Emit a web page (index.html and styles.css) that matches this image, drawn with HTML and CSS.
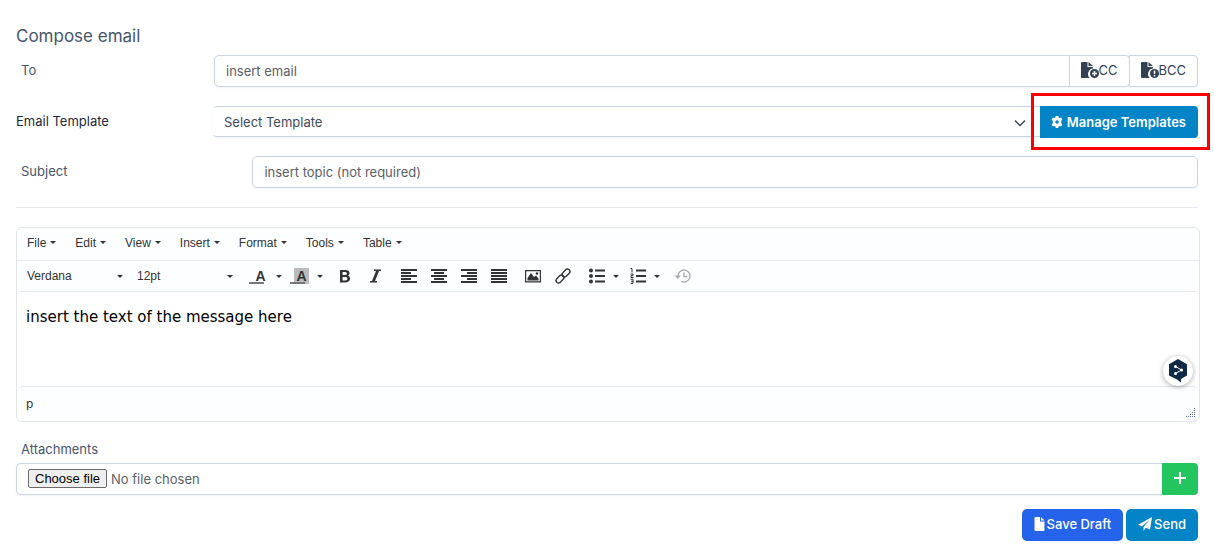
FILE: index.html
```html
<!DOCTYPE html>
<html lang="en">
<head>
<meta charset="UTF-8">
<meta name="viewport" content="width=device-width, initial-scale=1.0">
<title>Compose email</title>
<link rel="stylesheet" href="styles.css">
</head>
<body>
<form class="compose" onsubmit="return false">
    <h2>Compose email</h2>

    <div class="form-row">
        <label class="label-to" for="to">To</label>
        <div class="input-group">
            <input type="text" id="to" placeholder="insert email">
            <button type="button" class="btn-addon">
                <svg width="18" height="18" viewBox="0 0 18 18"><path d="M0 2a1 1 0 0 1 1-1h5.500v5H12v1.600a5.500 5.500 0 0 0-3.300 9.400H1a1 1 0 0 1-1-1z"/><path d="M7.500 1L12 5H7.500z"/><circle cx="13.500" cy="12.500" r="4.500"/><path class="mark" d="M13.500 10v5M11 12.500h5"/></svg>CC
            </button>
            <button type="button" class="btn-addon">
                <svg width="18" height="18" viewBox="0 0 18 18"><path d="M0 2a1 1 0 0 1 1-1h5.500v5H12v1.600a5.500 5.500 0 0 0-3.300 9.400H1a1 1 0 0 1-1-1z"/><path d="M7.500 1L12 5H7.500z"/><circle cx="13.500" cy="12.500" r="4.500"/><path class="mark" d="M13.500 9.500v3.500M13.500 14v1.500"/></svg>BCC
            </button>
        </div>
    </div>

    <div class="form-row">
        <label class="label-template" for="template">Email Template</label>
        <div class="input-group template-group">
            <div class="select-wrap">
                <select id="template">
                    <option>Select Template</option>
                </select>
                <svg class="chevron" width="12" height="8" viewBox="0 0 12 8"><path d="M1 1.500l5 5 5-5"/></svg>
            </div>
            <div class="manage">
                <button type="button" class="btn btn-manage">
                    <svg width="12" height="12" viewBox="0 0 12 12"><path fill-rule="evenodd" d="M4.800 0h2.400l.4 1.500 1 .6 1.600-.5 1.200 2.100-1.200 1.100v2.400l1.200 1.100-1.200 2.100-1.600-.5-1 .6-.4 1.500H4.800l-.4-1.500-1-.6-1.600.5L.6 8.300l1.200-1.100V4.800L.6 3.700l1.200-2.100 1.600.5 1-.6zM6 4.200a1.800 1.800 0 1 0 0 3.600 1.800 1.800 0 0 0 0-3.600z"/></svg>
                    Manage Templates
                </button>
                <span class="highlight"></span>
            </div>
        </div>
    </div>

    <div class="form-row row-subject">
        <label for="subject">Subject</label>
        <input type="text" id="subject" placeholder="insert topic (not required)">
    </div>

    <hr>

    <div class="editor">
        <div class="menubar">
            <button type="button" class="caret">File</button>
            <button type="button" class="caret">Edit</button>
            <button type="button" class="caret">View</button>
            <button type="button" class="caret">Insert</button>
            <button type="button" class="caret">Format</button>
            <button type="button" class="caret">Tools</button>
            <button type="button" class="caret">Table</button>
        </div>
        <div class="toolbar">
            <div class="tool-group">
                <button type="button" class="caret listbox">Verdana</button>
                <button type="button" class="caret listbox">12pt</button>
            </div>
            <div class="tool-group">
                <button type="button" class="caret color-btn" aria-label="Text color"><span class="swatch">A</span></button>
                <button type="button" class="caret color-btn" aria-label="Background color"><span class="swatch swatch-back">A</span></button>
            </div>
            <div class="tool-group">
                <button type="button" class="tool" aria-label="Bold"><svg width="16" height="16" viewBox="0 0 16 16"><path fill-rule="evenodd" d="M3 2h5.500c2.500 0 4 1.200 4 3.200 0 1.200-.6 2-1.600 2.500 1.400.4 2.200 1.500 2.200 2.900 0 2.200-1.700 3.900-4.300 3.900H3zM5.600 4v3H8c1.200 0 1.900-.5 1.900-1.500S9.200 4 8 4zM5.600 8.900v3.600h2.700c1.400 0 2.100-.6 2.100-1.900 0-1.100-.7-1.700-2.100-1.700z"/></svg></button>
                <button type="button" class="tool" aria-label="Italic"><svg width="16" height="16" viewBox="0 0 16 16"><path d="M7 1.500h7V3h-2L8 13h2v1.500H3V13h2L9 3H7z"/></svg></button>
            </div>
            <div class="tool-group">
                <button type="button" class="tool" aria-label="Align left"><svg width="16" height="16" viewBox="0 0 16 16"><path d="M0 1h16v2H0zM0 4h10v2H0zM0 7h16v2H0zM0 10h10v2H0zM0 13h16v2H0z"/></svg></button>
                <button type="button" class="tool" aria-label="Align center"><svg width="16" height="16" viewBox="0 0 16 16"><path d="M0 1h16v2H0zM3 4h10v2H3zM0 7h16v2H0zM3 10h10v2H3zM0 13h16v2H0z"/></svg></button>
                <button type="button" class="tool" aria-label="Align right"><svg width="16" height="16" viewBox="0 0 16 16"><path d="M0 1h16v2H0zM6 4h10v2H6zM0 7h16v2H0zM6 10h10v2H6zM0 13h16v2H0z"/></svg></button>
                <button type="button" class="tool" aria-label="Justify"><svg width="16" height="16" viewBox="0 0 16 16"><path d="M0 1h16v2H0zM0 4h16v2H0zM0 7h16v2H0zM0 10h16v2H0zM0 13h16v2H0z"/></svg></button>
            </div>
            <div class="tool-group">
                <button type="button" class="tool" aria-label="Insert image"><svg width="16" height="16" viewBox="0 0 16 16"><path fill-rule="evenodd" d="M0 2h16v12.500H0zM1.200 3.200v10.100h13.600V3.200z"/><path d="M2.500 12.500V10L6 5l3 4 2-1.500 2.500 3v2z"/><circle cx="12" cy="5.500" r="1.300"/></svg></button>
                <button type="button" class="tool" aria-label="Insert link"><svg class="line" width="16" height="16" viewBox="0 0 16 16"><rect x="-4.500" y="-2.500" width="9" height="5" rx="2.500" transform="translate(11 5) rotate(-45)"/><rect x="-4.500" y="-2.500" width="9" height="5" rx="2.500" transform="translate(5 11) rotate(-45)"/></svg></button>
            </div>
            <div class="tool-group">
                <button type="button" class="caret split" aria-label="Bullet list"><svg width="16" height="16" viewBox="0 0 16 16"><circle cx="2" cy="2.500" r="2"/><circle cx="2" cy="8" r="2"/><circle cx="2" cy="13.500" r="2"/><path d="M6 1.500h10v2H6zM6 7h10v2H6zM6 12.500h10v2H6z"/></svg></button>
                <button type="button" class="caret split" aria-label="Numbered list"><svg width="16" height="16" viewBox="0 0 16 16"><path d="M6 1.500h10v2H6zM6 7h10v2H6zM6 12.500h10v2H6z"/><path class="digits" d="M.5 .5H2v4M.5 6H3v1.700H1v1.800h2.500M.5 11.200H3v4.200H.5M1 13.300h2"/></svg></button>
            </div>
            <div class="tool-group">
                <button type="button" class="tool faded" aria-label="Restore last draft"><svg class="line" width="18" height="16" viewBox="0 0 18 16"><path d="M4 8a6 6 0 1 1 3.200 5.300M10 4.500V8.500h3"/><path class="fill" d="M.5 7.500h6.500l-3.200 3.600z"/></svg></button>
            </div>
        </div>
        <div class="edit-area">
            <div class="edit-text" contenteditable="true">insert the text of the message here</div>
            <button type="button" class="translate" aria-label="Translate">
                <svg width="20" height="24" viewBox="0 0 20 24"><path fill="#0f2b46" d="M10 0l9 5.200v11.300l-6 3.500v3.500L9 20.500l-8-4V5.200z"/><g fill="#fff"><circle cx="7.500" cy="7.500" r="1.500"/><circle cx="13.500" cy="11" r="1.500"/><circle cx="7.500" cy="14.500" r="1.500"/></g><path fill="none" stroke="#fff" d="M7.500 7.500l6 3.500-6 3.500"/></svg>
            </button>
        </div>
        <div class="statusbar">
            <span>p</span>
            <svg width="10" height="10" viewBox="0 0 10 10"><path d="M8.500 0v10M6.500 4v6M4.500 6v4M2.500 8v2M.5 8v2"/></svg>
        </div>
    </div>

    <div class="attachments">
        <label for="file">Attachments</label>
        <div class="input-group">
            <div class="file-box">
                <input type="file" id="file">
                <label class="file-btn" for="file">Choose file</label>
                <span id="file-name">No file chosen</span>
            </div>
            <button type="button" class="btn btn-add" aria-label="Add attachment">
                <svg width="12" height="12" viewBox="0 0 12 12"><path d="M5 0h2v5h5v2H7v5H5V7H0V5h5z"/></svg>
            </button>
        </div>
    </div>

    <div class="actions">
        <button type="button" class="btn btn-draft">
            <svg width="11" height="14" viewBox="0 0 11 14"><path d="M1.500 0H6v4.500h4.500V13a1 1 0 0 1-1 1h-8a1 1 0 0 1-1-1V1a1 1 0 0 1 1-1zM7 0l3.500 3.500H7z"/></svg>Save Draft
        </button>
        <button type="submit" class="btn btn-send">
            <svg width="14" height="14" viewBox="0 0 14 14"><path d="M14 0l-2 12.500-4.200-1.800L5.500 14v-4L11.500 3 4 9.200 0 7.700z"/></svg>Send
        </button>
    </div>
</form>

<script>
    const file = document.getElementById('file');
    file.addEventListener('change', () => {
        document.getElementById('file-name').textContent = file.files.length ? file.files[0].name : 'No file chosen';
    });
</script>
</body>
</html>
```
FILE: styles.css
```css
* {
    box-sizing: border-box;
}

body {
    margin: 0;
    background-color: #fff;
    font-family: Inter, "Liberation Sans", sans-serif;
    font-size: 13px;
    line-height: 20px;
    color: #475569;
}

button, input, select {
    font: inherit;
    color: inherit;
}

button {
    cursor: pointer;
}

svg {
    flex: none;
    fill: currentColor;
}

.compose {
    padding: 24px 16px 16px;
}

h2 {
    margin: 0 0 7px;
    font-size: 17px;
    line-height: 24px;
    font-weight: 400;
}

/* form rows */
.form-row {
    display: grid;
    grid-template-columns: 198px 1fr;
    height: 32px;
    margin-bottom: 19px;
}

.form-row > label {
    padding: 5px;
}

.form-row > .label-template {
    padding: 5px 0;
    color: #1e293b;
}

.row-subject {
    grid-template-columns: 20% 1fr;
    margin: -1px 0 0;
}

.input-group {
    display: flex;
    min-width: 0;
}

input[type="text"], select, .file-box {
    flex: 1;
    min-width: 0;
    height: 32px;
    padding: 0 11px;
    border: 1px solid #cbd5e1;
    border-radius: 5px;
    background-color: #fff;
    box-shadow: 0 1px 2px rgba(0, 0, 0, 0.05);
}

input::placeholder {
    color: #5b6067;
    opacity: 1;
}

.input-group > input[type="text"] {
    border-radius: 5px 0 0 5px;
}

.btn-addon {
    display: flex;
    align-items: center;
    height: 32px;
    margin-left: -1px;
    padding: 0 11px 2px;
    border: 1px solid #cbd5e1;
    border-radius: 0 4px 4px 0;
    background-color: #fff;
    color: #334155;
    box-shadow: 0 1px 2px rgba(0, 0, 0, 0.05);
}

.mark {
    fill: none;
    stroke: #fff;
    stroke-width: 1.5;
}

.template-group {
    margin-left: -2px;
}

.select-wrap {
    position: relative;
    display: flex;
    flex: 1;
}

select {
    appearance: none;
    height: 31px;
    border-left-color: transparent;
    border-right: none;
    border-radius: 5px 0 0 5px;
    color: #3f4a5a;
}

.chevron {
    position: absolute;
    right: 14px;
    top: 13px;
    fill: none;
    stroke: #334155;
    stroke-width: 1.3;
    pointer-events: none;
}

/* buttons */
.btn {
    display: flex;
    align-items: center;
    height: 32px;
    padding: 0 12px 3px;
    border: none;
    border-radius: 5px;
    background-color: #0284c7;
    color: #fff;
    font-weight: 500;
}

.manage {
    position: relative;
}

.btn-manage {
    gap: 4px;
    padding: 0 12px 1px 11px;
    border-radius: 0 4px 4px 0;
    font-weight: 600;
}

.highlight {
    position: absolute;
    inset: -13px -12px -12px -9px;
    border: 3px solid #f00;
    pointer-events: none;
}

hr {
    margin: 19px 0;
    border: none;
    border-top: 1px solid #e8ebef;
}

/* editor */
.editor {
    margin-right: -2px;
    border: 1px solid #e2e4e7;
    border-radius: 6px;
    color: #333;
    font-family: "Liberation Sans", Arial, sans-serif;
    font-size: 12px;
}

.editor button {
    border: none;
    background: none;
}

.menubar {
    display: flex;
    height: 33px;
    padding-left: 1px;
    border-bottom: 1px solid #ebedef;
    border-radius: 6px 6px 0 0;
    background-color: #fcfeff;
}

.menubar button {
    display: flex;
    align-items: center;
    gap: 4px;
    padding: 0 10px 3px 9px;
}

.caret::after {
    content: "";
    border: 3px solid transparent;
    border-top-color: #333;
    border-bottom: none;
}

.toolbar {
    display: flex;
    gap: 4px;
    height: 31px;
    margin: 0 3px;
    border-bottom: 1px solid #e5e7e9;
    background-color: #fcfeff;
}

.tool-group {
    display: flex;
}

.tool-group button {
    display: flex;
    align-items: center;
}

.tool-group .listbox {
    justify-content: space-between;
    width: 110px;
    padding: 0 7px;
}

.tool-group .tool {
    justify-content: center;
    width: 30px;
    padding: 0;
}

.tool-group .split {
    gap: 8px;
    width: 41px;
    padding: 0 0 0 7px;
}

.tool-group .color-btn {
    gap: 8px;
    width: 41px;
    padding: 0 0 0 5px;
}

.swatch {
    width: 19px;
    height: 16px;
    padding-left: 4px;
    background: linear-gradient(#777, #777) 0 100% / 15px 2px no-repeat;
    font-size: 14px;
    line-height: 16px;
    font-weight: 700;
}

.swatch-back {
    background: linear-gradient(#777, #777) 0 100% / 15px 2px no-repeat, linear-gradient(#bbb, #bbb) 100% 0 / 15px 16px no-repeat;
}

.line {
    fill: none;
    stroke: currentColor;
    stroke-width: 1.4;
}

.line .fill {
    fill: currentColor;
    stroke: none;
}

.digits {
    fill: none;
    stroke: currentColor;
}

.faded {
    opacity: 0.4;
}

.edit-area {
    position: relative;
    height: 94px;
}

.edit-text {
    padding: 15px 9px;
    color: #000;
    font-family: Verdana, "DejaVu Sans", sans-serif;
    font-size: 15px;
    outline: none;
}

.editor .translate {
    position: absolute;
    right: 6px;
    bottom: 0;
    display: flex;
    align-items: center;
    justify-content: center;
    width: 30px;
    height: 30px;
    padding: 0;
    border-radius: 50%;
    background-color: #fff;
    box-shadow: 0 1px 5px rgba(0, 0, 0, 0.35);
}

.statusbar {
    display: flex;
    justify-content: space-between;
    align-items: flex-end;
    height: 35px;
    padding: 3px 3px 3px 9px;
    border-top: 1px solid #e5e7e9;
    border-radius: 6px;
    background-color: #fcfeff;
}

.statusbar span {
    align-self: center;
    font-family: Inter, sans-serif;
}

.statusbar svg {
    stroke: #64748b;
    stroke-dasharray: 1 1;
}

/* attachments */
.attachments {
    margin-top: 17px;
}

.attachments > label {
    display: block;
    padding-left: 5px;
    margin-bottom: 4px;
}

.file-box {
    position: relative;
    display: flex;
    align-items: center;
    gap: 4px;
    padding-bottom: 1px;
    border-right: none;
    border-radius: 5px 0 0 5px;
    color: #5b6067;
}

.file-box input {
    position: absolute;
    width: 1px;
    height: 1px;
    opacity: 0;
}

.file-btn {
    padding: 0 6px;
    border: 1px solid #6b6b6b;
    border-radius: 2px;
    background-color: #efefef;
    color: #000;
    font-family: "Liberation Sans", Arial, sans-serif;
    line-height: 17px;
    cursor: pointer;
}

.btn-add {
    border-radius: 0 4px 4px 0;
    background-color: #22c55e;
}

.actions {
    display: flex;
    justify-content: flex-end;
    gap: 3px;
    margin-top: 14px;
}

.actions svg {
    margin-right: 2px;
}

.btn-draft {
    background-color: #2563eb;
}
```
